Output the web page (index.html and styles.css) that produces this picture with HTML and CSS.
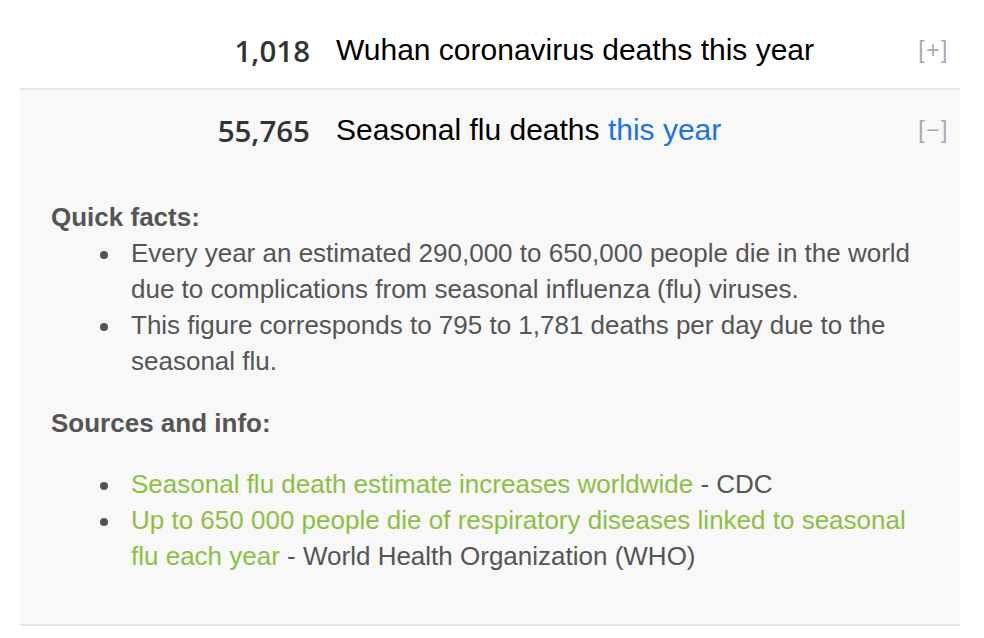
FILE: index.html
```html
<!DOCTYPE html>
<html>
<head>
<meta charset="utf-8">
<link rel="stylesheet" href="styles.css">
</head>
<body>
<div class="list">
  <div class="row">
    <div class="head">
      <span class="num">1,018</span>
      <span class="title">Wuhan coronavirus deaths this year</span>
      <span class="toggle">[+]</span>
    </div>
  </div>
  <div class="row open">
    <div class="head">
      <span class="num">55,765</span>
      <span class="title">Seasonal flu deaths <a class="blue" href="#">this year</a></span>
      <span class="toggle">[&minus;]</span>
    </div>
    <div class="details">
      <h4>Quick facts:</h4>
      <ul class="facts">
        <li>Every year an estimated 290,000 to 650,000 people die in the world due to complications from seasonal influenza (flu) viruses.</li>
        <li>This figure corresponds to 795 to 1,781 deaths per day due to the seasonal flu.</li>
      </ul>
      <h4 class="src-h">Sources and info:</h4>
      <ul class="sources">
        <li><a href="#">Seasonal flu death estimate increases worldwide</a> - CDC</li>
        <li><a href="#">Up to 650 000 people die of respiratory diseases linked to seasonal flu each year</a> - World Health Organization (WHO)</li>
      </ul>
    </div>
  </div>
</div>
</body>
</html>
```
FILE: styles.css
```css
html, body {
  margin: 0;
  padding: 0;
  background: #fff;
}
body {
  font-family: "Liberation Sans", Arial, sans-serif;
}
.list {
  width: 940px;
  margin-left: 20px;
  padding-top: 12px;
}
.row .head {
  height: 76px;
}
.row.open {
  background: #f8f8f8;
  border-top: 2px solid #e2e6ea;
  border-bottom: 2px solid #e2e6ea;
  padding-bottom: 50px;
}
.head {
  display: flex;
  align-items: center;
}
.row.open .head {
  height: 80px;
}
.num {
  width: 290px;
  text-align: right;
  font-family: "Open Sans", sans-serif;
  font-weight: 600;
  font-size: 29.5px;
  color: #333;
}
.title {
  flex: 1;
  margin-left: 26px;
  font-size: 30px;
  color: #000;
}
.blue {
  color: #1a73e8;
  text-decoration: none;
}
.toggle {
  font-size: 23px;
  letter-spacing: 1.5px;
  color: #aaa;
  margin-right: 11px;
}
.details {
  padding: 0 31px;
  color: #555;
  font-size: 26px;
  line-height: 36px;
}
h4 {
  margin: 29px 0 0;
  font-size: 26px;
  font-weight: bold;
  color: #555;
}
ul {
  margin: 0;
  padding-left: 80px;
  list-style: none;
}
li::before {
  content: "";
  display: inline-block;
  width: 8px;
  height: 8px;
  border-radius: 50%;
  background: #555;
  margin-left: -31px;
  margin-right: 23px;
  vertical-align: middle;
}
.src-h {
  margin-top: 26px;
}
.sources {
  margin-top: 25px;
}
.sources a {
  color: #8cc043;
  text-decoration: none;
}
```
